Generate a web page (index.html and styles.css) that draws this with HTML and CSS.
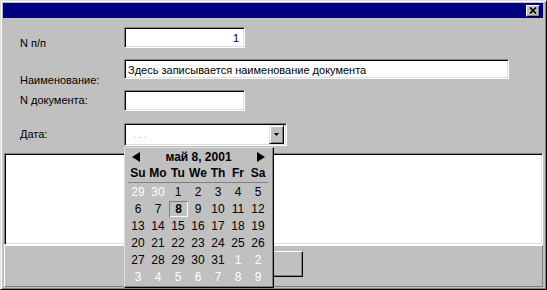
FILE: index.html
```html
<!DOCTYPE html>
<html>
<head>
<meta charset="UTF-8">
<link rel="stylesheet" href="styles.css">
</head>
<body>
<div class="window">
    <div class="titlebar">
        <span class="close-btn">
            <svg width="8" height="7" viewBox="0 0 8 7"><path d="M1 0.5l6 6M7 0.5l-6 6" stroke="#000" stroke-width="1.7"/></svg>
        </span>
    </div>
    <div class="form">
        <div class="row row-num">
            <span class="lbl">N п/п</span>
            <div class="field field-short num">1</div>
        </div>
        <div class="row row-name">
            <span class="lbl">Наименование:</span>
            <div class="field field-long">Здесь записывается наименование документа</div>
        </div>
        <div class="row row-doc">
            <span class="lbl">N документа:</span>
            <div class="field field-short"></div>
        </div>
        <div class="row row-date">
            <span class="lbl">Дата:</span>
            <div class="combo">
                <span class="mask">. . .</span>
                <span class="drop-btn">
                    <svg width="5" height="3" viewBox="0 0 5 3"><polygon points="0,0 5,0 2.5,3" fill="#000"/></svg>
                </span>
                <div class="calendar">
                    <div class="cal-head">
                        <svg width="8" height="10" viewBox="0 0 8 10"><polygon points="8,0 8,10 0,5" fill="#000"/></svg>
                        <span class="cal-title">май 8, 2001</span>
                        <svg width="8" height="10" viewBox="0 0 8 10"><polygon points="0,0 0,10 8,5" fill="#000"/></svg>
                    </div>
                    <div class="cal-days">
                        <span>Su</span><span>Mo</span><span>Tu</span><span>We</span><span>Th</span><span>Fr</span><span>Sa</span>
                    </div>
                    <div class="cal-grid">
                        <span class="o">29</span><span class="o">30</span><span>1</span><span>2</span><span>3</span><span>4</span><span>5</span>
                        <span>6</span><span>7</span><span class="sel">8</span><span>9</span><span>10</span><span>11</span><span>12</span>
                        <span>13</span><span>14</span><span>15</span><span>16</span><span>17</span><span>18</span><span>19</span>
                        <span>20</span><span>21</span><span>22</span><span>23</span><span>24</span><span>25</span><span>26</span>
                        <span>27</span><span>28</span><span>29</span><span>30</span><span>31</span><span class="o">1</span><span class="o">2</span>
                        <span class="o">3</span><span class="o">4</span><span class="o">5</span><span class="o">6</span><span class="o">7</span><span class="o">8</span><span class="o">9</span>
                    </div>
                </div>
            </div>
        </div>
    </div>
    <div class="memo"></div>
    <div class="panel">
        <div class="btn"></div>
    </div>
</div>
</body>
</html>
```

FILE: styles.css
```css
body {
    margin: 0;
    padding: 0;
    background-color: #c0c0c0;
    color: #000;
    font-family: "Liberation Sans", Arial, sans-serif;
    font-size: 11px;
}

.window {
    box-sizing: border-box;
    width: 547px;
    height: 290px;
    background-color: #c0c0c0;
    border: 1px solid;
    border-color: #dfdfdf #000 #000 #dfdfdf;
    box-shadow: inset 1px 1px #fff, inset -1px -1px #808080;
    padding: 2px 3px 2px 2px;
    display: flex;
    flex-direction: column;
}

.titlebar {
    height: 15px;
    flex: none;
    background-color: #000080;
    display: flex;
    justify-content: flex-end;
    align-items: center;
    padding-right: 3px;
}

.close-btn {
    box-sizing: border-box;
    width: 14px;
    height: 12px;
    background-color: #c0c0c0;
    border: 1px solid;
    border-color: #fff #000 #000 #fff;
    box-shadow: inset -1px -1px #808080;
    display: flex;
    justify-content: center;
    align-items: center;
}

.form {
    padding: 9px 0 0 17px;
    flex: none;
}

.row {
    display: flex;
    align-items: flex-start;
}

.row-num { height: 32px; }
.row-name { height: 31px; }
.row-doc { height: 33px; }
.row-date { height: 23px; }

.lbl {
    width: 104px;
    flex: none;
    line-height: 13px;
}

.row-num .lbl { margin-top: 10px; }
.row-name .lbl { margin-top: 15px; }
.row-doc .lbl { margin-top: 4px; }
.row-date .lbl { margin-top: 5px; }

/* sunken edit boxes */
.field,
.combo,
.memo {
    box-sizing: border-box;
    background-color: #fff;
    border: 1px solid;
    border-color: #808080 #fff #fff #808080;
    box-shadow: inset 1px 1px #000, inset -1px -1px #dfdfdf;
}

.field {
    height: 21px;
    padding: 2px 3px 0 3px;
    line-height: 16px;
    white-space: nowrap;
}

.field-short { width: 121px; }

.field-long {
    width: 385px;
    height: 20px;
    padding-top: 3px;
    line-height: 15px;
}

.num { text-align: right; padding-right: 5px; }

.combo {
    position: relative;
    width: 163px;
    height: 23px;
    display: flex;
    align-items: center;
    justify-content: space-between;
    padding: 0 2px 0 8px;
}

.mask {
    color: #a8a8a8;
    font-size: 10px;
}

.drop-btn {
    box-sizing: border-box;
    width: 15px;
    height: 19px;
    background-color: #c0c0c0;
    border: 1px solid;
    border-color: #dfdfdf #000 #000 #dfdfdf;
    box-shadow: inset 1px 1px #fff, inset -1px -1px #808080;
    display: flex;
    justify-content: center;
    align-items: center;
}

/* dropdown calendar */
.calendar {
    position: absolute;
    top: 23px;
    left: -1px;
    z-index: 2;
    box-sizing: border-box;
    width: 150px;
    height: 141px;
    background-color: #c0c0c0;
    border: 1px solid;
    border-color: #dfdfdf #000 #000 #dfdfdf;
    box-shadow: inset -1px -1px #808080;
    padding: 1px 0 0 3px;
    font-size: 12px;
}

.cal-head {
    width: 140px;
    height: 16px;
    box-sizing: border-box;
    padding: 0 3px 0 4px;
    display: flex;
    align-items: center;
    justify-content: space-between;
}

.cal-title {
    font-weight: bold;
}

.cal-days,
.cal-grid {
    width: 140px;
    display: grid;
    grid-template-columns: repeat(7, 20px);
    text-align: center;
}

.cal-days {
    height: 17px;
    line-height: 17px;
    font-weight: bold;
    border-bottom: 1px solid #808080;
}

.cal-grid {
    margin-top: 1px;
    grid-auto-rows: 17px;
    line-height: 17px;
}

.cal-grid .o {
    color: #fff;
}

.cal-grid .sel {
    font-weight: bold;
    line-height: 16px;
    margin: 0 0 1px 1px;
    box-shadow: inset 1px 1px #808080, inset -1px -1px #fff;
}

.memo {
    flex: none;
    height: 92px;
    margin: 7px 0 0 1px;
}

.panel {
    flex: none;
    box-sizing: border-box;
    height: 42px;
    margin-left: 1px;
    border: 1px solid;
    border-color: #fff #808080 #808080 #fff;
}

.btn {
    box-sizing: border-box;
    width: 75px;
    height: 26px;
    margin: 5px 0 0 223px;
    border: 1px solid;
    border-color: #fff #000 #000 #fff;
    box-shadow: inset -1px -1px #808080;
}
```
